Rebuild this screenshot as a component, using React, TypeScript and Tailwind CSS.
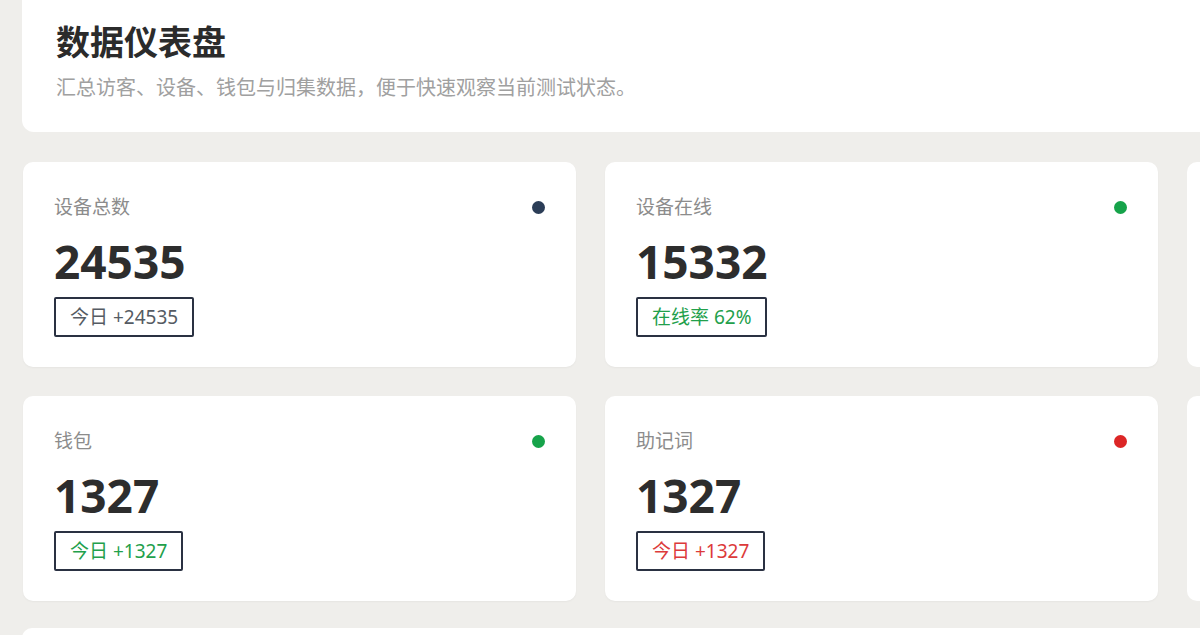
type Stat = { label: string; value: string; badge: string; dot: string; tone: string };

const rows: Stat[] = [
  { label: "设备总数", value: "24535", badge: "今日 +24535", dot: "bg-[#2b3d57]", tone: "text-[#555b63]" },
  { label: "设备在线", value: "15332", badge: "在线率 62%", dot: "bg-[#16a34a]", tone: "text-[#22a04b]" },
  { label: "钱包", value: "1327", badge: "今日 +1327", dot: "bg-[#16a34a]", tone: "text-[#22a04b]" },
  { label: "助记词", value: "1327", badge: "今日 +1327", dot: "bg-[#dc2626]", tone: "text-[#dc3a3a]" },
];

function StatCard({ label, value, badge, dot, tone }: Stat) {
  return (
    <div className="flex flex-col rounded-[10px] bg-white px-[31px] pt-[31px] pb-[30px] shadow-[0_1px_2px_rgba(0,0,0,0.04)]">
      <div className="flex items-center justify-between">
        <span className="text-[19px] leading-[29px] text-[#8c8c8c]">{label}</span>
        <span className={`h-[13px] w-[13px] rounded-full ${dot}`} />
      </div>
      <div className="mt-[12px] text-[46px] font-bold leading-[54px] text-[#2d2d2d]">{value}</div>
      <div className="mt-[9px] flex">
        <span className={`rounded-[2px] border-2 border-[#2a3142] px-[14px] py-[4px] text-[19px] leading-[28px] ${tone}`}>
          {badge}
        </span>
      </div>
    </div>
  );
}

export default function App() {
  return (
    <div
      className="h-[635px] w-[1200px] overflow-hidden bg-[#efeeeb]"
      style={{ fontFamily: '"Noto Sans", "Noto Sans CJK SC", sans-serif' }}
    >
      <div className="w-[1760px] pl-[22px]">
        {/* header */}
        <div className="-mt-[16px] rounded-[12px] bg-white pt-[38px] pb-[30px] pl-[34px]">
          <h1 className="text-[34px] font-bold leading-[40px] text-[#2b2b2b]">数据仪表盘</h1>
          <p className="mt-[12px] text-[20px] leading-[28px] text-[#a0a0a0]">
            汇总访客、设备、钱包与归集数据，便于快速观察当前测试状态。
          </p>
        </div>

        {/* stat cards, third column runs off screen */}
        <div className="mt-[30px] grid grid-cols-[repeat(3,553px)] gap-[29px] pl-px">
          <StatCard {...rows[0]} />
          <StatCard {...rows[1]} />
          <div className="rounded-[10px] bg-white" />
          <StatCard {...rows[2]} />
          <StatCard {...rows[3]} />
          <div className="rounded-[10px] bg-white" />
        </div>

        <div className="mt-[27px] h-[120px] rounded-[10px] bg-white" />
      </div>
    </div>
  );
}
